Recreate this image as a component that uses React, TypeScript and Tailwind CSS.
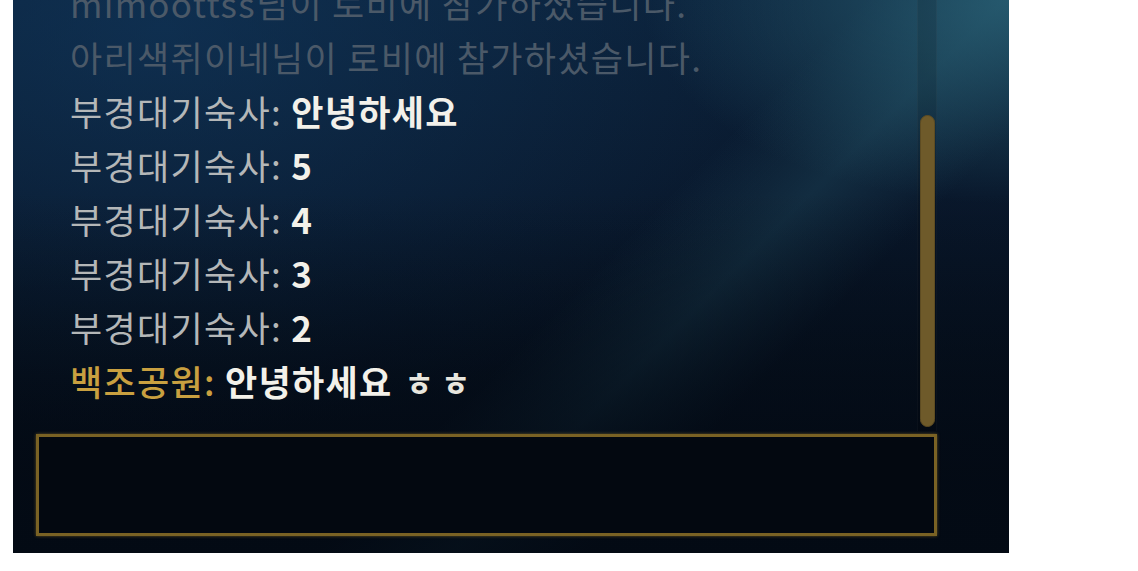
import React from 'react';

type Line =
  | { kind: 'system'; text: string }
  | { kind: 'chat'; name: string; message: string; gold?: boolean; laugh?: boolean };

const lines: Line[] = [
  { kind: 'system', text: 'mimoottss님이 로비에 참가하셨습니다.' },
  { kind: 'system', text: '아리색쥐이네님이 로비에 참가하셨습니다.' },
  { kind: 'chat', name: '부경대기숙사', message: '안녕하세요' },
  { kind: 'chat', name: '부경대기숙사', message: '5' },
  { kind: 'chat', name: '부경대기숙사', message: '4' },
  { kind: 'chat', name: '부경대기숙사', message: '3' },
  { kind: 'chat', name: '부경대기숙사', message: '2' },
  { kind: 'chat', name: '백조공원', message: '안녕하세요', gold: true, laugh: true },
];

const ChatLine = ({ line }: { line: Line }) => {
  if (line.kind === 'system') {
    return (
      <div className="h-[54px] leading-[54px] whitespace-nowrap text-[#4b5968]">{line.text}</div>
    );
  }
  return (
    <div className="h-[54px] leading-[54px] whitespace-nowrap">
      <span className={line.gold ? 'text-[#c9a040] font-medium' : 'text-[#b4b7b8]'}>{line.name}: </span>
      <span className="font-bold text-[#f3f1ea]">{line.message}</span>
      {line.laugh && (
        <span className="font-bold text-[#e8e6de] text-[32px] leading-none tracking-[7px] ml-[12px]">ㅎㅎ</span>
      )}
    </div>
  );
};

export default function App() {
  return (
    <div className="w-[1138px] h-[571px] bg-white">
      <div
        className="ml-[13px] w-[996px] h-[553px] flex flex-col pl-[23px] pr-[72px] overflow-hidden bg-[radial-gradient(ellipse_at_100%_0%,rgba(45,105,125,0.7),transparent_26%),linear-gradient(180deg,transparent_35%,rgba(3,10,20,0.8)_85%),linear-gradient(135deg,transparent_55%,rgba(38,88,108,0.32)_64%,transparent_73%),radial-gradient(ellipse_at_15%_5%,rgba(18,60,100,0.55),transparent_55%),linear-gradient(180deg,#0b2038_0%,#09182c_35%,#06101e_68%,#030a14_100%)]"
        style={{ fontFamily: '"Noto Sans CJK KR", "Noto Sans", sans-serif' }}
      >
        <div className="h-[431px] flex">
          <div className="flex-1 flex flex-col justify-end overflow-hidden pl-[34px] pb-[23px] text-[35px] tracking-[1.3px]">
            {lines.map((line, i) => (
              <ChatLine key={i} line={line} />
            ))}
          </div>
          <div className="w-[20px] flex flex-col items-center bg-[rgba(0,0,0,0.12)] border-x border-[rgba(255,255,255,0.03)]">
            <div className="mt-[115px] w-[15px] h-[312px] rounded-full bg-[#6e5a2a] border border-[#5e4c22]"></div>
          </div>
        </div>
        <div className="mt-[3px] h-[102px] border-[3px] border-[#7a6224] bg-[#030810] shadow-[0_0_3px_rgba(160,125,40,0.6)]"></div>
      </div>
    </div>
  );
}
